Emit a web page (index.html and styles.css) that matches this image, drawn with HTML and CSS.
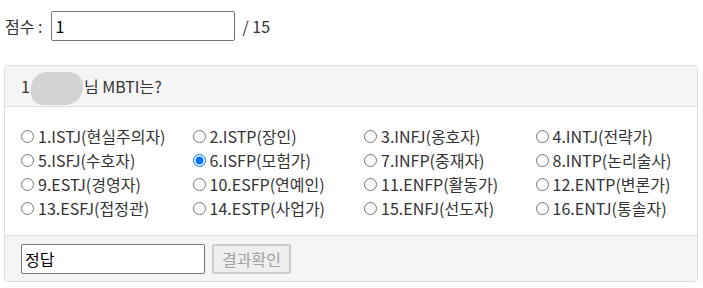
FILE: index.html
```html
<html>
    <head>
        <title>MBTI</title>
        <meta name="viewport" content="width=device-width, initial-scale=1.0">
        <link rel="stylesheet" href="styles.css">
    </head>
    <body>
        <div class="score">
            <span>점수 :</span><input type="text" class="score-input" value="1" /><span>/ 15</span>
        </div>
        <form class="panel">
            <div class="panel-heading">1<span class="blur"></span>님 MBTI는?</div>
            <div class="panel-body">
                <label><input type="radio" name="mbti" value="1" /> 1.ISTJ(현실주의자)</label>
                <label><input type="radio" name="mbti" value="2" /> 2.ISTP(장인)</label>
                <label><input type="radio" name="mbti" value="3" /> 3.INFJ(옹호자)</label>
                <label><input type="radio" name="mbti" value="4" /> 4.INTJ(전략가)</label>
                <label><input type="radio" name="mbti" value="5" /> 5.ISFJ(수호자)</label>
                <label><input type="radio" name="mbti" value="6" checked /> 6.ISFP(모험가)</label>
                <label><input type="radio" name="mbti" value="7" /> 7.INFP(중재자)</label>
                <label><input type="radio" name="mbti" value="8" /> 8.INTP(논리술사)</label>
                <label><input type="radio" name="mbti" value="9" /> 9.ESTJ(경영자)</label>
                <label><input type="radio" name="mbti" value="10" /> 10.ESFP(연예인)</label>
                <label><input type="radio" name="mbti" value="11" /> 11.ENFP(활동가)</label>
                <label><input type="radio" name="mbti" value="12" /> 12.ENTP(변론가)</label>
                <label><input type="radio" name="mbti" value="13" /> 13.ESFJ(접정관)</label>
                <label><input type="radio" name="mbti" value="14" /> 14.ESTP(사업가)</label>
                <label><input type="radio" name="mbti" value="15" /> 15.ENFJ(선도자)</label>
                <label><input type="radio" name="mbti" value="16" /> 16.ENTJ(통솔자)</label>
            </div>
            <div class="panel-footer">
                <input type="text" class="answer" value="정답" />
                <button type="button" class="check" disabled>결과확인</button>
            </div>
        </form>
    </body>
</html>
```
FILE: styles.css
```css
body {margin:0;padding:0 5px 0 4px;color:#333;font-family:"Noto Sans CJK KR", sans-serif;font-size:16px;line-height:20px;background:#fff;}
.score {display:flex;align-items:center;gap:5px;margin:11px 0 0 1px;height:30px;}
.score .score-input {margin:0 2px 0 4px;}
.score-input, .answer {width:184px;height:30px;box-sizing:border-box;border:1px solid #767676;border-radius:2px;padding:0 3px;font:inherit;color:#000;}
.panel {margin:24px 0 0;border:1px solid #ddd;border-radius:4px;overflow:hidden;}
.panel-heading {background:#f5f5f5;border-bottom:1px solid #ddd;padding:10px 15px 10px 16px;height:20px;}
.blur {display:inline-block;width:52px;height:33px;margin:-8px 1px -8px 1px;vertical-align:middle;background:#d2d3d5;border-radius:16px 14px 18px 12px;}
.panel-body {display:grid;grid-template-columns:repeat(4, 171.5px);grid-auto-rows:24px;padding:17px 15px 15px 16px;}
.panel-body label {display:flex;align-items:center;gap:4px;white-space:nowrap;}
.panel-body input {margin:0;width:13px;height:13px;accent-color:#0075ff;}
.panel-footer {background:#f5f5f5;border-top:1px solid #ddd;padding:8px 15px 7px 16px;display:flex;gap:7px;}
.check {width:79px;height:30px;font:inherit;color:#a0a0a0;background:#efefef;border:2px solid #ccc;border-radius:2px;padding:0;}
```
